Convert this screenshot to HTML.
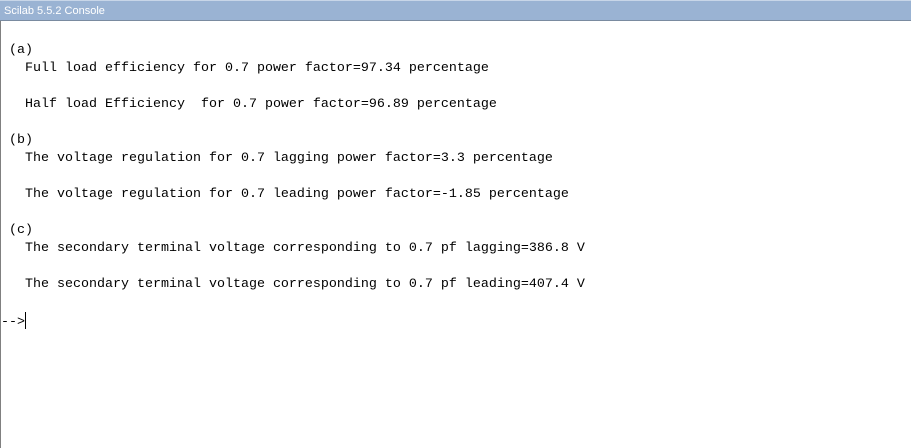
<!DOCTYPE html>
<html><head><meta charset="utf-8"><style>
html,body{margin:0;padding:0;background:#fff;width:911px;height:448px;overflow:hidden}
.title{position:absolute;left:0;top:0;width:911px;height:21px;background:#9ab3d3;border-bottom:1px solid #7a8ba0;box-sizing:border-box;font-family:"Liberation Sans",sans-serif;font-size:11px;color:#fff;line-height:21px;padding-left:4px;border-top:1px solid #c8d6e8}
.lb{position:absolute;left:0;top:21px;width:1px;height:427px;background:#808080}
pre{position:absolute;left:1px;top:42px;margin:0;font-family:"Liberation Mono",monospace;font-size:13.33px;line-height:18px;color:#000}
.cur{display:inline-block;width:1px;height:17px;background:#000;vertical-align:-4px}
</style></head><body>
<div class="title">Scilab 5.5.2 Console</div>
<div class="lb"></div>
<pre> (a)
   Full load efficiency for 0.7 power factor=97.34 percentage
 
   Half load Efficiency  for 0.7 power factor=96.89 percentage
 
 (b)
   The voltage regulation for 0.7 lagging power factor=3.3 percentage
 
   The voltage regulation for 0.7 leading power factor=-1.85 percentage
 
 (c)
   The secondary terminal voltage corresponding to 0.7 pf lagging=386.8 V
 
   The secondary terminal voltage corresponding to 0.7 pf leading=407.4 V
 
--><span class="cur"></span></pre>
</body></html>
